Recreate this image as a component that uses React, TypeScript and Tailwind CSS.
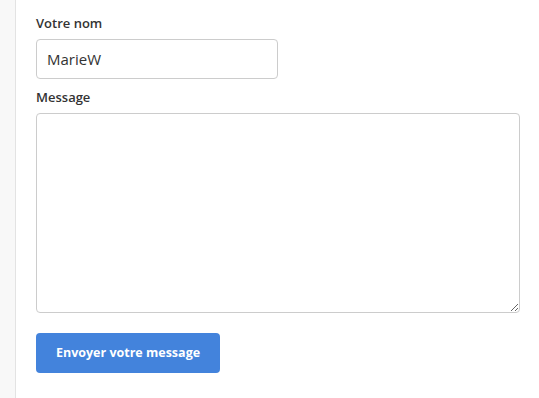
export default function App() {
  return (
    <div
      className="flex h-[398px] w-[539px] bg-white text-[#333]"
      style={{ fontFamily: '"Open Sans", sans-serif' }}
    >
      <div className="w-[16px] shrink-0 border-r border-[#e3e3e3] bg-[#f8f8f8]" />
      <div className="flex-1 pl-5 pt-[14px]">
        <label className="block text-[13px] font-semibold leading-[18px]">Votre nom</label>
        <input
          type="text"
          defaultValue="MarieW"
          className="mt-[7px] block h-[40px] w-[242px] rounded border border-[#cccccc] px-[10px] text-[15px] text-[#333] outline-none"
        />
        <label className="mt-[9px] block text-[13px] font-semibold leading-[18px]">Message</label>
        <textarea className="mt-[7px] block h-[200px] w-[484px] rounded border border-[#cccccc] px-[10px] py-2 text-[15px] outline-none" />
        <button
          type="button"
          className="mt-[20px] block h-[40px] w-[184px] rounded bg-[#4383dc] text-[12.5px] font-bold text-white"
        >
          Envoyer votre message
        </button>
      </div>
    </div>
  );
}
